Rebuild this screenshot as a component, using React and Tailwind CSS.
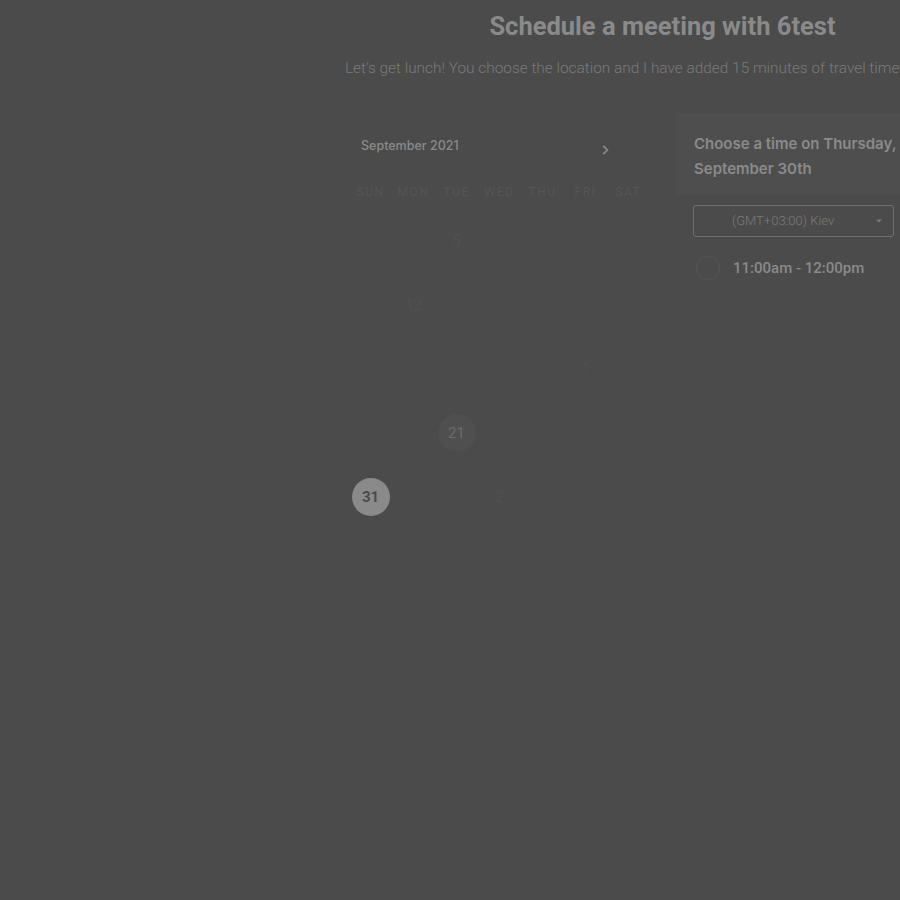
const days = ['SUN', 'MON', 'TUE', 'WED', 'THU', 'FRI', 'SAT']

// only the cells that show through the overlay
const weeks = [
  ['', '', '5', '', '', '', ''],
  ['', '12', '', '', '', '', ''],
  ['', '', '', '', '', '1', ''],
  ['', '', '21', '', '', '', ''],
  ['31', '', '', '2', '', '', ''],
]

const Day = ({ value }) => {
  if (value === '21') {
    return (
      <div className="w-[38px] h-[38px] rounded-full bg-[#4f4f4f] flex items-center justify-center text-[15px] text-[#6c6c6c]">
        {value}
      </div>
    )
  }
  if (value === '31') {
    return (
      <div className="w-[38px] h-[38px] rounded-full bg-[#8a8a8a] flex items-center justify-center text-[15px] font-bold text-[#4b4b4b]">
        {value}
      </div>
    )
  }
  return (
    <div className="w-[38px] h-[38px] flex items-center justify-center text-[15px] font-light text-[#525252]">
      {value}
    </div>
  )
}

const App = () => {
  return (
    <div className="w-[900px] h-[900px] bg-[#4b4b4b] overflow-hidden font-['Roboto',sans-serif]">
      <div className="ml-[345px] w-[635px]">
        <h1 className="pt-[11px] text-center text-[25.5px] leading-[30px] font-bold text-[#8a8a8a]">
          Schedule a meeting with 6test
        </h1>
        <p className="mt-[17px] whitespace-nowrap text-[15.4px] leading-[20px] font-light text-[#7a7a7a]">
          Let’s get lunch! You choose the location and I have added 15 minutes of travel time
        </p>

        <div className="mt-[35px] flex">
          <div className="w-[300px] pt-[23px]">
            <div className="flex items-center justify-between pl-[16px] pr-[33px]">
              <span className="text-[12.5px] font-medium text-[#8a8a8a] font-['Inter',sans-serif]">September 2021</span>
              <svg width="14" height="14" viewBox="0 0 24 24" fill="none" stroke="#8a8a8a" strokeWidth="3" className="mt-[7px]">
                <path d="M9 5l7 7-7 7" />
              </svg>
            </div>
            <div className="mt-[26px] ml-[4px] grid grid-cols-7 w-[301px]">
              {days.map((d) => (
                <div key={d} className="text-center text-[12px] tracking-[1.5px] text-[#555555]">{d}</div>
              ))}
            </div>
            <div className="ml-[4px] mt-[21px] w-[301px]">
              {weeks.map((w, i) => (
                <div key={i} className="grid grid-cols-7 h-[64px]">
                  {w.map((v, j) => (
                    <div key={j} className="flex justify-center items-start">
                      <Day value={v} />
                    </div>
                  ))}
                </div>
              ))}
            </div>
          </div>

          <div className="ml-[31px] w-[240px]">
            <div className="bg-[#4e4e4e] pl-[18px] pt-[18px] pb-[14px]">
              <h2 className="text-[15px] leading-[25px] font-semibold text-[#8a8a8a] font-['Inter',sans-serif] whitespace-nowrap">
                Choose a time on Thursday,
                <br />
                September 30th
              </h2>
            </div>
            <div className="pl-[17px]">
              <div className="mt-[10px] w-[201px] h-[32px] border border-[#6f6f6f] rounded-[3px] flex items-center justify-between pl-[38px] pr-[9px]">
                <span className="text-[13px] font-light text-[#7a7a7a]">(GMT+03:00) Kiev</span>
                <svg width="10" height="10" viewBox="0 0 10 10">
                  <path d="M2 3.5h6L5 6.5z" fill="#7a7a7a" />
                </svg>
              </div>
              <div className="mt-[19px] flex items-center">
                <div className="w-[24px] h-[24px] rounded-full border border-[#565656] ml-[3px]"></div>
                <span className="ml-[13px] text-[15px] font-medium text-[#8a8a8a]">11:00am - 12:00pm</span>
              </div>
            </div>
          </div>
        </div>
      </div>
    </div>
  )
}

export default App
